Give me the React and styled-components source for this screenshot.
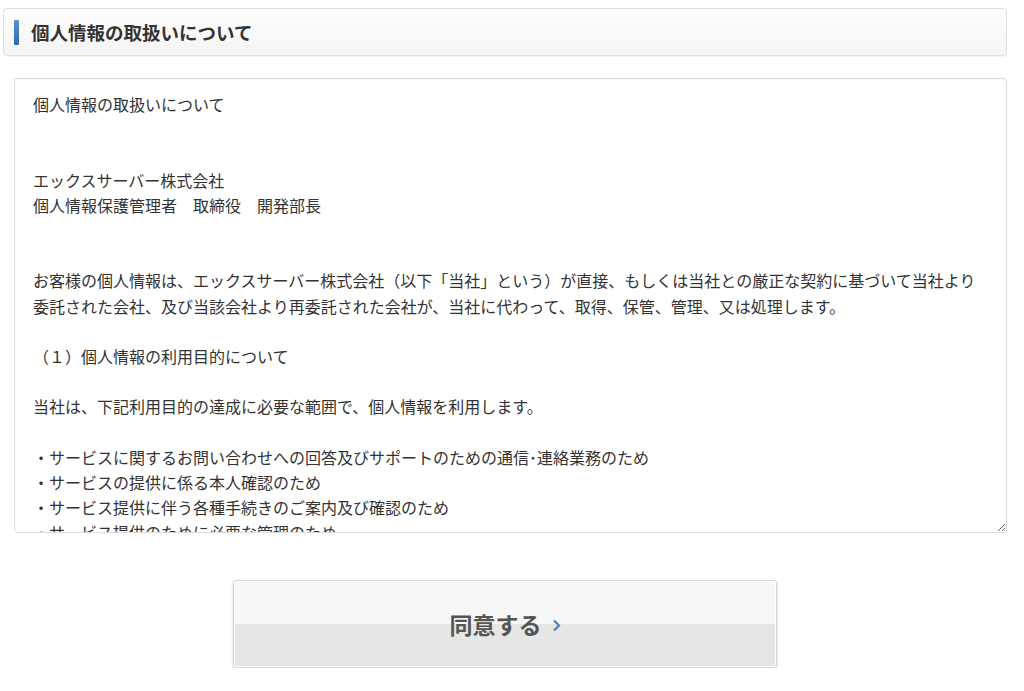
import React from 'react';
import styled, { createGlobalStyle } from 'styled-components';

const GlobalStyle = createGlobalStyle`
  body {
    margin: 0;
    background: #fff;
    font-family: "Noto Sans CJK JP", "Noto Sans", sans-serif;
    color: #333;
  }
`;

const Page = styled.div`
  padding: 8px 17px 0 3px;
  display: flex;
  flex-direction: column;
`;

const SectionHead = styled.div`
  height: 48px;
  box-sizing: border-box;
  display: flex;
  align-items: center;
  gap: 12px;
  padding-left: 10px;
  border: 1px solid #e0e0e0;
  border-radius: 4px;
  background: linear-gradient(#fefefe, #f4f4f4);
  box-shadow: 0 1px 1px rgba(0, 0, 0, 0.05);
`;

const Bar = styled.span`
  width: 5px;
  height: 25px;
  border-radius: 1px;
  background: linear-gradient(#5a92cf, #2f6aaa);
`;

const Title = styled.h2`
  margin: 0;
  font-size: 18.5px;
  font-weight: 700;
  color: #333;
  line-height: 1;
`;

const Terms = styled.textarea`
  margin: 22px 0 0 11px;
  height: 455px;
  box-sizing: border-box;
  padding: 13px 18px;
  border: 1px solid #dcdcdc;
  border-radius: 3px;
  font-family: "Noto Sans CJK JP", "Noto Sans", sans-serif;
  font-size: 16px;
  line-height: 25.2px;
  text-spacing-trim: space-all;
  color: #333;
  background: #fff;
  outline: none;
  resize: vertical;
  scrollbar-width: none;
  box-shadow: inset 0 1px 2px rgba(0, 0, 0, 0.03);
`;

const Actions = styled.div`
  display: flex;
  justify-content: center;
  margin-top: 47px;
`;

const AgreeButton = styled.button`
  width: 544px;
  height: 88px;
  display: flex;
  align-items: center;
  justify-content: center;
  gap: 10px;
  border: 1px solid #d6d6d6;
  border-radius: 3px;
  background: linear-gradient(#f7f7f7 50%, #e6e6e6 50%);
  box-shadow: inset 0 0 0 1px #fff, 0 1px 3px rgba(0, 0, 0, 0.18);
  font-family: "Noto Sans CJK JP", "Noto Sans", sans-serif;
  font-size: 23px;
  font-weight: 700;
  color: #555;
  cursor: pointer;
`;

const Chevron = () => (
  <svg width="9" height="13" viewBox="0 0 9 13" style={{ marginTop: 3 }}>
    <path d="M2 1.5 L7 6.5 L2 11.5" fill="none" stroke="#4d83bd" strokeWidth="2.2" />
  </svg>
);

const policyText = [
  '個人情報の取扱いについて',
  '',
  '',
  'エックスサーバー株式会社',
  '個人情報保護管理者　取締役　開発部長',
  '',
  '',
  'お客様の個人情報は、エックスサーバー株式会社（以下「当社」という）が直接、もしくは当社との厳正な契約に基づいて当社より',
  '委託された会社、及び当該会社より再委託された会社が、当社に代わって、取得、保管、管理、又は処理します。',
  '',
  '（１）個人情報の利用目的について',
  '',
  '当社は、下記利用目的の達成に必要な範囲で、個人情報を利用します。',
  '',
  '・サービスに関するお問い合わせへの回答及びサポートのための通信･連絡業務のため',
  '・サービスの提供に係る本人確認のため',
  '・サービス提供に伴う各種手続きのご案内及び確認のため',
  '・サービス提供のために必要な管理のため',
  '・料金の請求及び支払いの確認のため',
  '・新サービス、キャンペーン等のご案内のため',
  '',
  '（２）個人情報の第三者提供について',
].join('\n');

export default function App() {
  return (
    <>
      <GlobalStyle />
      <Page lang="ja">
        <SectionHead>
          <Bar />
          <Title>個人情報の取扱いについて</Title>
        </SectionHead>
        <Terms readOnly value={policyText} />
        <Actions>
          <AgreeButton type="button">
            同意する
            <Chevron />
          </AgreeButton>
        </Actions>
      </Page>
    </>
  );
}
